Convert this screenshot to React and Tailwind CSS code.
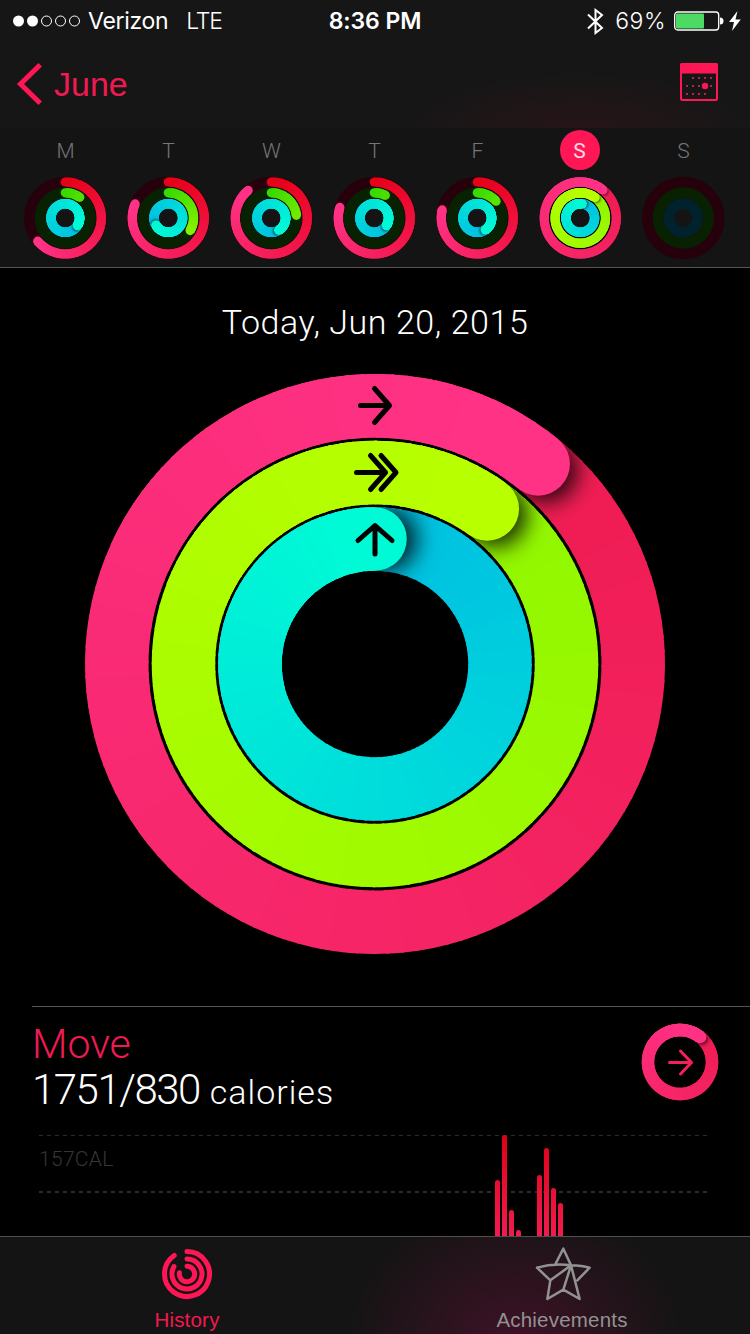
import { useId } from 'react';

const PINK = { start: [230, 0, 24], mid: [239, 28, 82], end: [255, 50, 134], track: '#26000a' };
const GREEN = { start: [58, 218, 0], mid: [145, 247, 0], end: [184, 255, 0], track: '#082100' };
const CYAN = { start: [0, 186, 225], mid: [0, 190, 225], end: [0, 250, 214], track: '#00222d' };

const WEEK = [
  { day: 'M', move: 230, exercise: 35, stand: 482 },
  { day: 'T', move: 293, exercise: 120, stand: 600 },
  { day: 'W', move: 320, exercise: 84, stand: 509 },
  { day: 'T', move: 287, exercise: 26, stand: 482 },
  { day: 'F', move: 283, exercise: 48, stand: 506 },
  { day: 'S', move: 399, exercise: 396, stand: 368, today: true },
  { day: 'S', empty: true },
];

const BARS = [
  [0, 1180], [7, 1135], [14, 1210], [21, 1230],
  [42, 1175], [49, 1148], [56, 1188], [63, 1203],
];

const point = (r, deg) => {
  const a = (deg * Math.PI) / 180;
  return [r * Math.sin(a), -r * Math.cos(a)];
};

const blend = (a, b, t) => a.map((v, i) => Math.round(v + (b[i] - v) * t));
const rgb = (c) => `rgb(${c.join(',')})`;

const arc = (r, from, to) => {
  const [x1, y1] = point(r, from);
  const [x2, y2] = point(r, to);
  return `M${x1.toFixed(3)} ${y1.toFixed(3)}A${r} ${r} 0 0 1 ${x2.toFixed(3)} ${y2.toFixed(3)}`;
};

// angle is the total sweep in degrees, more than 360 wraps over itself
function Ring({ r, width, angle, color, blur = 1, shade = 0.55, full }) {
  const id = useId();
  const wraps = angle >= 360;
  const from = wraps ? angle - 360 : 0;
  const sweep = angle - from;
  const first = wraps ? color.mid : color.start;
  const last = full || wraps ? color.end : blend(color.start, color.end, Math.min(1, angle / 200));
  const step = 3;
  // neighbouring pieces overlap by about 2px so that no seams show
  const overlap = Math.max(0.6, 115 / r);
  const segments = [];
  for (let a = 0; a < sweep; a += step) {
    segments.push({ a, b: Math.min(a + step + overlap, sweep), fill: rgb(blend(first, last, Math.min(1, a / (sweep * 0.96)))) });
  }
  const draw = (s) => (
    <path key={s.a} d={arc(r, from + s.a, from + s.b)} stroke={s.fill} strokeWidth={width} fill="none" />
  );
  const [cx, cy] = point(r, angle);
  const [sx, sy] = point(r, angle + (width * 9) / r);
  const [x0, y0] = point(r, 0);
  const outer = r + width / 2;
  const inner = r - width / 2;

  return (
    <g>
      {!wraps && <circle cx={x0} cy={y0} r={width / 2} fill={rgb(first)} />}
      {segments.map(draw)}
      {wraps && (
        <>
          <clipPath id={`${id}c`}>
            <path
              clipRule="evenodd"
              d={`M0 ${-outer}A${outer} ${outer} 0 1 1 0 ${outer}A${outer} ${outer} 0 1 1 0 ${-outer}ZM0 ${-inner}A${inner} ${inner} 0 1 1 0 ${inner}A${inner} ${inner} 0 1 1 0 ${-inner}Z`}
            />
          </clipPath>
          <filter id={`${id}b`} x="-100%" y="-100%" width="300%" height="300%">
            <feGaussianBlur stdDeviation={blur} />
          </filter>
          <g clipPath={`url(#${id}c)`}>
            <circle cx={sx} cy={sy} r={width / 2} fill="#000" fillOpacity={shade} filter={`url(#${id}b)`} />
          </g>
          {segments.slice(-35).map(draw)}
        </>
      )}
      <circle cx={cx} cy={cy} r={width / 2} fill={rgb(last)} />
    </g>
  );
}

function DayRings({ data }) {
  const rings = [
    [36, 9.2, data.move, PINK],
    [25.2, 9.2, data.exercise, GREEN],
    [14.3, 9.4, data.stand, CYAN],
  ];
  return (
    <svg className="h-[84px] w-[84px]" viewBox="-42.300 -42 84 84">
      {data.today && <circle r="25" fill="none" stroke="#000" strokeWidth="30" />}
      {rings.map(([r, w, angle, color]) => (
        <g key={r}>
          {!data.today && <circle r={r} fill="none" stroke={color.track} strokeWidth={w + 1.2} />}
          {!data.empty && <Ring r={r} width={w} angle={angle} color={color} full={color === PINK} />}
        </g>
      ))}
    </svg>
  );
}

function StatusBar() {
  return (
    <div className="flex h-10 items-center pt-0.5 font-['Inter'] text-white">
      <div className="flex flex-1 items-center pl-[13px]">
        <svg className="h-3 w-[68px]" viewBox="0 0 68 12">
          <circle cx="5.5" cy="6" r="5.5" fill="#fff" />
          <circle cx="19.5" cy="6" r="5.5" fill="#fff" />
          {[33.5, 47.5, 61.5].map((x) => (
            <circle key={x} cx={x} cy="6" r="5" fill="none" stroke="#fff" />
          ))}
        </svg>
        <span className="ml-[7px] text-[23px] tracking-[-0.3px]">Verizon</span>
        <span className="ml-[18px] text-[23px] font-light tracking-[-1.3px]">LTE</span>
      </div>
      <div className="mr-1 text-[23px] font-semibold tracking-[-0.1px]">8:36 PM</div>
      <div className="flex flex-1 items-center justify-end pr-[9px]">
        <svg className="h-[27px] w-[17px]" viewBox="0 0 17 27" fill="none" stroke="#fff" strokeWidth="2">
          <path d="M1 6.500l14 13.500-6.500 5V2l6.500 5L1 20.500" />
        </svg>
        <span className="ml-[11px] text-[23px] font-light tracking-[0.5px]">69%</span>
        <svg className="ml-2 h-5 w-[50px]" viewBox="0 0 50 20">
          <rect x="0.7" y="1" width="44" height="18" rx="3" fill="none" stroke="#fff" strokeWidth="1.3" />
          <rect x="2" y="2.5" width="28" height="15" rx="1" fill="#4cd964" />
          <path d="M46 6.5a3.5 3.5 0 010 7z" fill="#fff" />
        </svg>
        <svg className="ml-[5px] h-5 w-3" viewBox="0 0 12 20">
          <path d="M8.500 0L0 11h5L3 20l8.700-11.500H6.500z" fill="#fff" />
        </svg>
      </div>
    </div>
  );
}

function CalendarIcon() {
  const dots = [
    [13, 15], [19, 15], [25, 15], [31, 15],
    [7, 23], [13, 23], [19, 23], [31, 23],
    [7, 31], [13, 31], [19, 31], [25, 31],
  ];
  return (
    <svg className="h-[38px] w-[38px]" viewBox="0 0 38 38">
      <rect x="1" y="1" width="36" height="36" rx="1.500" fill="none" stroke="#ff1654" strokeWidth="2" />
      <rect x="0" y="0" width="38" height="10.500" rx="1.500" fill="#ff1654" />
      {dots.map(([x, y]) => (
        <rect key={`${x}-${y}`} x={x - 1} y={y - 1} width="2" height="2" fill="#b8234b" />
      ))}
      <circle cx="25" cy="23" r="3.200" fill="#ff1654" />
    </svg>
  );
}

function Header() {
  return (
    <header className="h-[268px] shrink-0 border-b border-[#555] bg-[#141414]">
      <div className="h-32 bg-[#161616] bg-[radial-gradient(ellipse_180px_65px_at_580px_135px,#281518,transparent)]">
        <StatusBar />
        <div className="flex h-[88px] items-center justify-between pr-8 pb-1 pl-4">
          <div className="flex items-center pt-1 text-[#ff1654]">
            <svg className="h-[42px] w-[26px]" viewBox="0 0 26 42" fill="none" stroke="currentColor" strokeWidth="5">
              <path d="M24.200 1.800L4.500 21l19.700 19.200" />
            </svg>
            <span className="ml-3 font-['Liberation_Sans'] text-[34px] leading-none text-[#f01a50]">June</span>
          </div>
          <CalendarIcon />
        </div>
      </div>
      <div className="flex px-[13px]">
        {WEEK.map((d, i) => (
          <div key={i} className="flex w-[103px] flex-col items-center">
            <div
              className={
                d.today
                  ? "mt-[2px] flex h-10 w-10 items-center justify-center rounded-full bg-[#ff1654] pt-1 font-['Roboto'] text-[21px] text-[#ffd9e2]"
                  : "mt-[2px] flex h-10 w-10 items-center justify-center pt-1 pl-0.5 font-['Roboto'] text-[21px] font-light text-[#767676]"
              }
            >
              {d.day}
            </div>
            <div className="mt-[6px]">
              <DayRings data={d} />
            </div>
          </div>
        ))}
      </div>
    </header>
  );
}

function BigRings() {
  return (
    <svg className="mx-auto mt-[28px] h-[584px] w-[584px] shrink-0" viewBox="-292 -292 584 584">
      <Ring r={258.2} width={63.5} angle={399.2} color={PINK} blur={11} shade={0.85} full />
      <Ring r={191.5} width={63.5} angle={395.9} color={GREEN} blur={11} shade={0.85} full />
      <Ring r={125} width={63.5} angle={360} color={CYAN} blur={11} shade={0.85} full />
      <g fill="none" stroke="#000" strokeWidth="5" strokeLinecap="round" strokeLinejoin="round">
        <path d="M-14.500-258.500h29M-.5-275.500l15 17-15 17" />
        <path d="M-18.500-191.500h29M-4.500-208.500l15 17-15 17M6-208.500l15 17-15 17" />
        <path d="M0-110v-28M-17-123.500l17-15 17 15" />
      </g>
    </svg>
  );
}

function MoveSection() {
  return (
    <section className="mt-[50px] ml-8 shrink-0 border-t border-[#555]">
      <div className="flex h-[106px] justify-between pr-[30px]">
        <div className="pt-[13px] font-['Roboto'] font-light">
          <div className="text-[41px] leading-[48px] text-[#f01a50]">Move</div>
          <div className="leading-[44px] text-white">
            <span className="text-[42px] tracking-[-1.500px]">1751/830</span>
            <span className="ml-[10px] text-[34px] tracking-[1px]">calories</span>
          </div>
        </div>
        <svg className="mt-[15px] h-20 w-20" viewBox="-40 -40 80 80">
          <Ring r={32} width={12.4} angle={399} color={PINK} blur={2} shade={0.75} full />
          <path d="M-10.500 0.500h22M0.500-11l11 11.500L0.500 12" fill="none" stroke="#f5205a" strokeWidth="3" strokeLinecap="round" strokeLinejoin="round" />
        </svg>
      </div>
      <svg className="mt-[17px] h-[106px] w-[718px]" viewBox="32 1130 718 106">
        <defs>
          <linearGradient id="bar" gradientUnits="userSpaceOnUse" x1="0" y1="1135" x2="0" y2="1236">
            <stop stopColor="#e00016" />
            <stop offset="1" stopColor="#f21b50" />
          </linearGradient>
        </defs>
        <path d="M39 1135.500H707" stroke="#2b2b2b" strokeDasharray="4 4" />
        <path d="M39 1192H707" stroke="#2b2b2b" strokeWidth="2" strokeDasharray="4 4" />
        <text x="39" y="1166" fill="#363636" className="font-['Roboto'] text-[21px] font-light tracking-[0.3px]">157CAL</text>
        {BARS.map(([x, top]) => (
          <rect key={x} x={495 + x} y={top} width="5" height={1250 - top} rx="2.500" fill="url(#bar)" />
        ))}
      </svg>
    </section>
  );
}

function TabBar() {
  return (
    <nav className="flex h-[98px] shrink-0 border-t border-[#505050] bg-[#141414] bg-[radial-gradient(ellipse_170px_150px_at_515px_110px,#401226,transparent)] font-['Liberation_Sans'] text-[20.500px]">
      <div className="flex w-[374px] flex-col items-center pt-[11px] text-[#f01a50]">
        <svg className="h-[52px] w-[52px]" viewBox="-26 -26 52 52" fill="none" stroke="#ff1654" strokeWidth="5" strokeLinecap="round">
          <path d="M0-22.500A22.500 22.500 0 1 1-12.800-18.500" />
          <path d="M0-15A15 15 0 1 1-13-7.500" />
          <path d="M0-7.700A7.700 7.700 0 1 1-7.600-1.200" />
        </svg>
        <span className="mt-2 leading-6 tracking-[0.2px]">History</span>
      </div>
      <div className="flex w-[376px] flex-col items-center pt-[10px] text-[#929292]">
        <svg className="ml-0.5 h-[54px] w-[57px]" viewBox="254 82 171 162" fill="none" stroke="currentColor" strokeWidth="7.500" strokeLinejoin="round" strokeLinecap="round">
          <path d="M316 132L339 87L362 137M260 144Q310 130 362 137Q395 138 418 144L381 182M260 144L300 182L291 238L339 210L388 238L362 137L339 210M362 137L300 182" />
        </svg>
        <span className="mt-[7px] leading-6 tracking-[0.2px]">Achievements</span>
      </div>
    </nav>
  );
}

export default function App() {
  return (
    <div className="flex h-[1334px] w-[750px] flex-col overflow-hidden bg-black">
      <Header />
      <main className="flex h-[968px] shrink-0 flex-col">
        <h1 className="mt-[32px] shrink-0 text-center font-['Roboto'] text-[34px] leading-[44px] font-light tracking-[0.55px] text-white">
          Today, Jun 20, 2015
        </h1>
        <BigRings />
        <MoveSection />
      </main>
      <TabBar />
    </div>
  );
}
